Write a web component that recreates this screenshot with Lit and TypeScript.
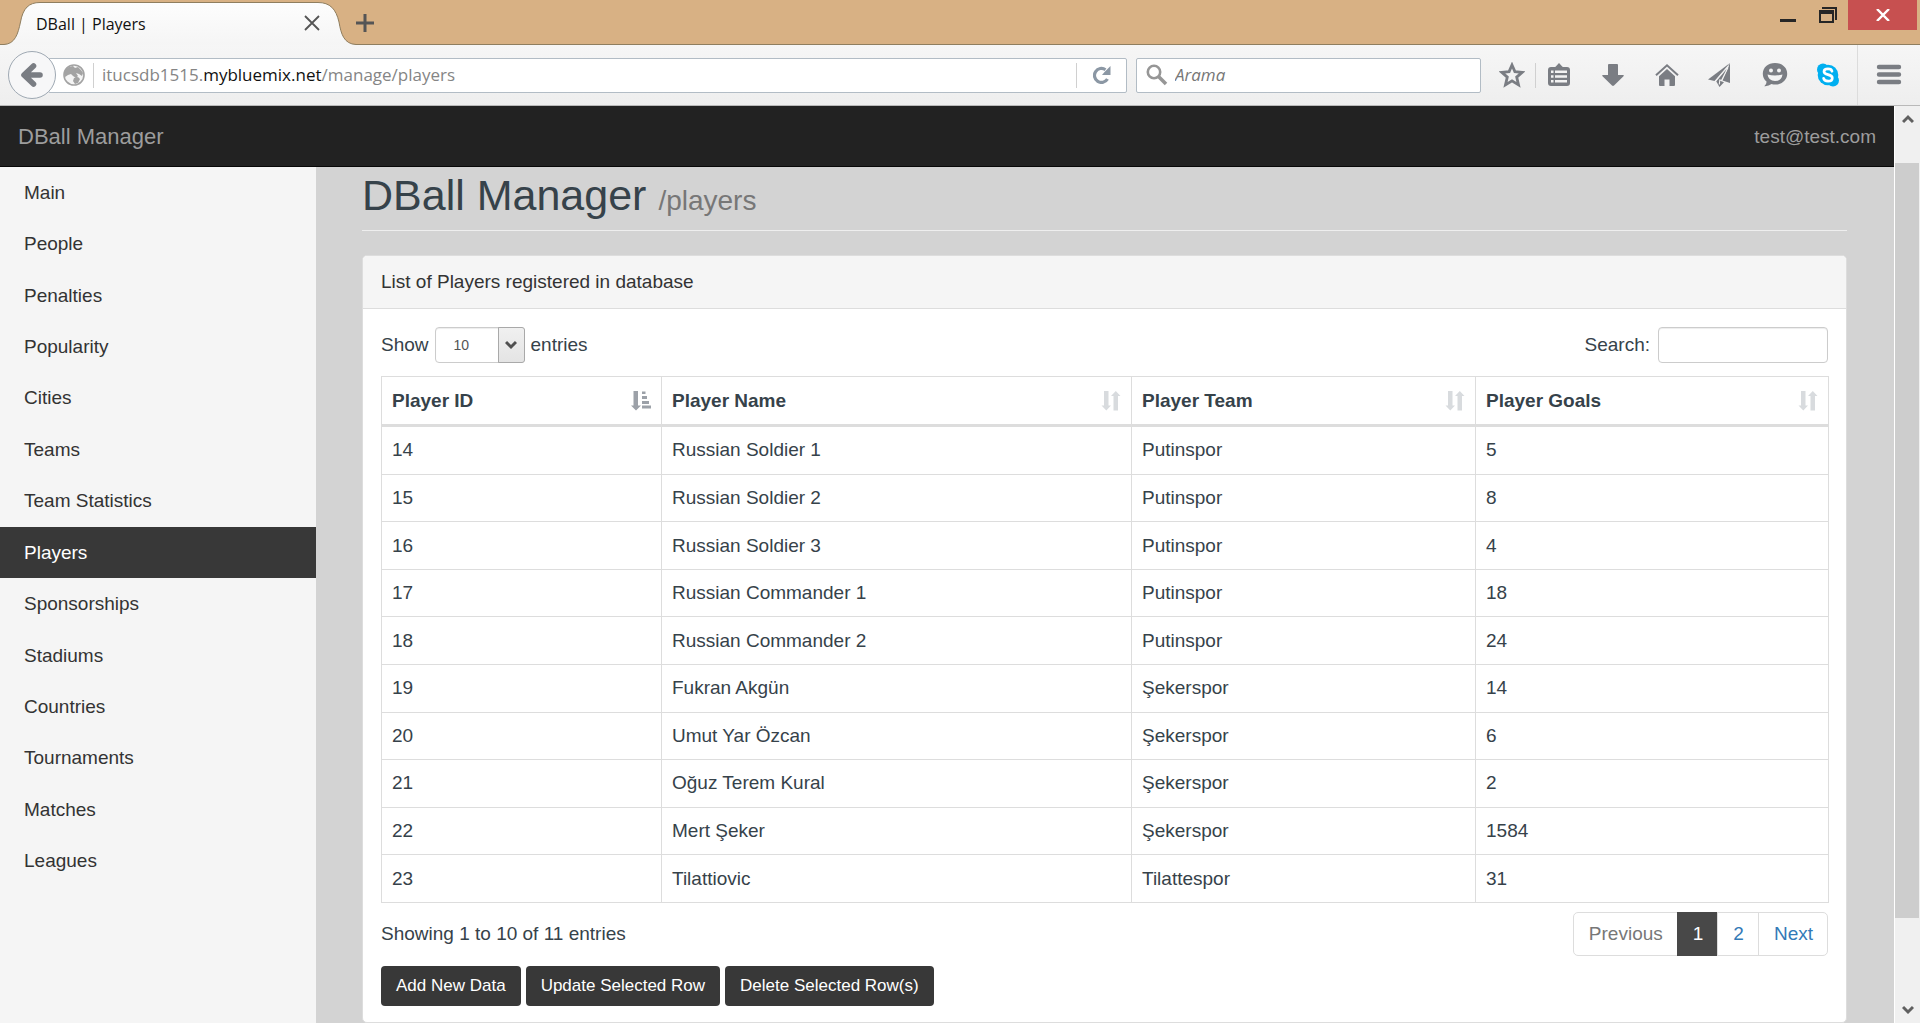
import { LitElement, html, css, svg } from "lit";
import { customElement, property, state } from "lit/decorators.js";
import { classMap } from "lit/directives/class-map.js";

const GRAY = "#7a7d83";

const star = svg`<svg width="26" height="26" viewBox="0 0 26 26" aria-hidden="true"><path d="M13 3 L15.9 9.6 L23.2 10.3 L17.7 15.1 L19.5 22.9 L13 18.9 L6.5 22.9 L8.3 15.1 L2.8 10.3 L10.1 9.6 Z" fill="none" stroke="${GRAY}" stroke-width="2.8"/></svg>`;
const list = svg`<svg width="24" height="26" viewBox="0 0 24 26" aria-hidden="true"><path d="M4 5 H8 Q8.6 4.8 9 4.2 L12 1 L15 4.2 Q15.4 4.8 16 5 H20 Q23 5 23 8 V21 Q23 24 20 24 H4 Q1 24 1 21 V8 Q1 5 4 5 Z" fill="${GRAY}"/><path d="M4 8.500 h2.500 v2.500 h-2.500z M8 8.500 h12 v2.500 h-12z M4 13.200 h2.500 v2.500 h-2.500z M8 13.200 h12 v2.500 h-12z M4 18 h2.500 v2.500 h-2.500z M8 18 h12 v2.500 h-12z" fill="#f3f3f3"/></svg>`;
const download = svg`<svg width="24" height="26" viewBox="0 0 24 26" aria-hidden="true"><path d="M8 2 H16 Q17 2 17 3 V13 H22 Q23.500 13 22.500 14.200 L13 23.500 Q12 24.400 11 23.500 L1.500 14.200 Q0.500 13 2 13 H7 V3 Q7 2 8 2 Z" fill="${GRAY}"/></svg>`;
const home = svg`<svg width="26" height="26" viewBox="0 0 26 26" aria-hidden="true"><path d="M2 13.300 L13 3.300 L24 13.300" fill="none" stroke="${GRAY}" stroke-width="2"/><path d="M5 14.300 L13 7 L21 14.300 V23 Q21 24 20 24 H15.500 V17.500 H10.500 V24 H6 Q5 24 5 23 Z" fill="${GRAY}"/></svg>`;
const plane = svg`<svg width="28" height="26" viewBox="0 0 28 26" aria-hidden="true"><path d="M23 1 L1 17.500 L7.500 19 Z" fill="${GRAY}"/><path d="M23 1 V21 L15.500 18.500 Z" fill="${GRAY}"/><path d="M22.500 2.500 L9 19 L12.500 25 L17 20.300 L14.300 19.300 Z" fill="${GRAY}"/><path d="M21.500 4 L8.500 19.300 M21 5.500 L14.500 18.500 L12.800 18 L12.300 22.500" fill="none" stroke="#f3f3f3" stroke-width="1.100"/></svg>`;
const smile = svg`<svg width="26" height="26" viewBox="0 0 26 26" aria-hidden="true"><path d="M13 1 C20 1 25.200 5.500 25.200 11.800 C25.200 18 20 22.600 13 22.600 Q11.500 22.600 9.500 22.100 Q6.500 24.500 2.300 24.200 Q4.700 22.500 4.500 19.600 Q0.800 16.600 0.800 11.800 C0.800 5.500 6 1 13 1 Z" fill="${GRAY}"/><circle cx="9" cy="8.500" r="2" fill="#f3f3f3"/><circle cx="17" cy="8.500" r="2" fill="#f3f3f3"/><path d="M5.500 12.500 Q13 14.500 20.500 12.500 Q19.500 19 13 19 Q6.500 19 5.500 12.500 Z" fill="#f3f3f3"/></svg>`;
const skype = svg`<svg width="26" height="26" viewBox="0 0 26 26" aria-hidden="true"><circle cx="7" cy="7.500" r="6" fill="#00aff0"/><circle cx="17" cy="18.500" r="6" fill="#00aff0"/><circle cx="12" cy="13" r="10.300" fill="#00aff0"/><path d="M16 9.300 C15.600 7.300 13.800 6.900 12 6.900 C9.600 6.900 8 8 8 9.700 C8 13.500 16.300 11.800 16.300 15.900 C16.300 18 14.400 19.100 12.100 19.100 C9.800 19.100 8 18.200 7.600 16.300" fill="none" stroke="#fff" stroke-width="2.700" stroke-linecap="round"/></svg>`;
const menu = svg`<svg width="26" height="22" viewBox="0 0 26 22" aria-hidden="true"><path d="M3 3 H23 M3 10.500 H23 M3 18 H23" stroke="${GRAY}" stroke-width="4.400" stroke-linecap="round"/></svg>`;

const sortBoth = svg`<svg class="sort both" width="20" height="20" viewBox="0 0 20 20" aria-hidden="true"><path d="M3 0 H7.500 V14.500 H10 L5.300 19.500 L0.500 14.500 H3 Z M12.500 19.500 H17 V5 H19.500 L14.800 0 L10 5 H12.500 Z" fill="#d8dbde"/></svg>`;
const sortAsc = svg`<svg class="sort" width="20" height="20" viewBox="0 0 20 20" aria-hidden="true"><path d="M2.500 0 H7 V14.500 H10 L5 19.500 L0 14.500 H2.500 Z M11 0.500 H14.500 V3 H11 Z M11 5 H16 V8 H11 Z M11 10 H18 V13 H11 Z M11 14.500 H20 V17.500 H11 Z" fill="#9ca1a8"/></svg>`;

@customElement("browser-chrome")
class BrowserChrome extends LitElement {
  static styles = css`
    :host { display: block; font-family: "Open Sans", "Noto Sans", sans-serif; font-size: 17px; }
    button { border: 0; padding: 0; margin: 0; background: none; display: flex; align-items: center; justify-content: center; }
    .titlebar { height: 44px; background: #d8b184; border-bottom: 1px solid #8f7e5f; display: flex; align-items: flex-start; }
    .tab { position: relative; width: 346px; height: 45px; display: flex; align-items: center; }
    .tab-shape { position: absolute; left: 0; top: 0; }
    .title { position: relative; flex: 1; padding-left: 36px; padding-top: 3px; line-height: 24px; font-size: 16px; color: #111; }
    .tab-close { position: relative; width: 24px; height: 42px; margin-right: 22px; }
    .new-tab { width: 38px; height: 46px; margin-right: auto; }
    .win { width: 40px; height: 44px; align-items: flex-start; }
    .win-close { width: 69px; height: 30px; background: #c75050; margin-right: 3px; align-items: center; }
    .toolbar { height: 60px; border-bottom: 1px solid #b9b9b9; background: linear-gradient(#f6f6f6, #eeeeee); display: flex; align-items: center; }
    .back { z-index: 1; width: 48px; height: 48px; margin: 0 -8px 0 8px; border: 1px solid #9fa9b3; border-radius: 50%; background: #f7f7f8; box-sizing: border-box; }
    .field { height: 35px; box-sizing: border-box; border: 1px solid #b2bcc5; background: #fff; display: flex; align-items: center; border-radius: 2px; }
    .url { flex: 1; padding-left: 14px; min-width: 0; }
    .sep { width: 1px; height: 25px; background: #d0d0d0; }
    .globe { margin-right: 8px; flex: none; }
    .address { flex: 1; padding-left: 8px; color: #858585; white-space: nowrap; overflow: hidden; line-height: 24px; }
    .domain { color: #111; }
    .reload { width: 49px; height: 33px; }
    .find { width: 345px; margin: 0 8px 0 9px; padding-left: 9px; gap: 7px; }
    .find input { flex: 1; min-width: 0; border: 0; outline: 0; padding: 0; background: none; font: italic 17px/24px "Open Sans", "Noto Sans", sans-serif; color: #333; }
    .find input::placeholder { color: #777; opacity: 1; }
    .icon { width: 46px; height: 48px; }
    .tools { display: flex; gap: 8px; margin-right: 5px; }
    .edge { width: 1px; height: 60px; background: #dcdcdc; }
    .menu { width: 62px; height: 60px; }
  `;

  render() {
    return html`
      <div class="titlebar">
        <div class="tab">
          <svg class="tab-shape" width="370" height="45" viewBox="0 0 370 45" aria-hidden="true">
            <defs><linearGradient id="tab-fill" x1="0" y1="0" x2="0" y2="1"><stop offset="0" stop-color="#fdfdfd"/><stop offset="1" stop-color="#f5f5f5"/></linearGradient></defs>
            <path d="M0 44.500 H4 C15 44 18 34 20.500 22 C23 8 29 2.500 40 2.500 H318 C330 2.500 336 9 339 22 C341 34 344 44 356 44.500 V46 H0 Z" fill="url(#tab-fill)"/>
            <path d="M0 44.500 H4 C15 44 18 34 20.500 22 C23 8 29 2.500 40 2.500 H318 C330 2.500 336 9 339 22 C341 34 344 44 356 44.500" fill="none" stroke="#8f7e5f"/>
          </svg>
          <span class="title">DBall | Players</span>
          <button class="tab-close" aria-label="Close tab"><svg width="16" height="16" viewBox="0 0 16 16" aria-hidden="true"><path d="M1 1 L15 15 M15 1 L1 15" stroke="#555" stroke-width="1.800"/></svg></button>
        </div>
        <button class="new-tab" aria-label="New tab"><svg width="18" height="18" viewBox="0 0 18 18" aria-hidden="true"><path d="M9 0 V18 M0 9 H18" stroke="#555" stroke-width="3"/></svg></button>
        <button class="win" aria-label="Minimize"><svg width="18" height="24" viewBox="0 0 18 24" aria-hidden="true"><path d="M1 19 H17 V22 H1 Z" fill="#262626"/></svg></button>
        <button class="win" aria-label="Restore"><svg width="18" height="24" viewBox="0 0 18 24" aria-hidden="true"><path d="M3 7 H18 V20 H16 V9 H3 Z M0 10 H15 V23 H0 Z M2 14 V21 H13 V14 Z" fill="#262626" fill-rule="evenodd"/></svg></button>
        <button class="win-close" aria-label="Close window"><svg width="14" height="12" viewBox="0 0 14 12" aria-hidden="true"><path d="M1 0 L13 12 M13 0 L1 12" stroke="#fff" stroke-width="2.400"/></svg></button>
      </div>
      <div class="toolbar">
        <button class="back" aria-label="Back"><svg width="24" height="26" viewBox="0 0 24 26" aria-hidden="true"><path d="M13.500 4 L4 13 L13.500 22 M5 13 H20" fill="none" stroke="${GRAY}" stroke-width="5.600" stroke-linejoin="round" stroke-linecap="round"/></svg></button>
        <div class="field url">
          <svg class="globe" width="22" height="22" viewBox="0 0 22 22" aria-hidden="true"><circle cx="11" cy="11" r="10" fill="#f4f4f4" stroke="#a3a3a3" stroke-width="1.600"/><path d="M6 3 L10 2 L12 4 L15 3 L18 6 L20 9 L19 12 L16 10 L13 9 L15 12 L13 14 L10 12 L8 10 L5 11 L2 13 L1 9 L3 5 Z M11 14 L15 13 L17 15 L15 19 L12 20 L10 17 Z" fill="#a3a3a3"/></svg>
          <span class="sep"></span>
          <div class="address" role="textbox" aria-label="Address">itucsdb1515.<span class="domain">mybluemix.net</span>/manage/players</div>
          <span class="sep"></span>
          <button class="reload" aria-label="Reload"><svg width="18" height="18" viewBox="0 0 18 18" aria-hidden="true"><path d="M14.500 13 A7 7 0 1 1 12.500 3.700" fill="none" stroke="#8b97a4" stroke-width="3.200"/><path d="M17.500 0 V9 H9 L11.500 6 L14 3.500 Z" fill="#8b97a4"/></svg></button>
        </div>
        <div class="field find">
          <svg width="22" height="22" viewBox="0 0 22 22" aria-hidden="true"><circle cx="8" cy="8" r="6.200" fill="none" stroke="#969696" stroke-width="2.600"/><path d="M12.500 12.500 L20 20" stroke="#969696" stroke-width="3.600"/></svg>
          <input type="search" aria-label="Arama" placeholder="Arama" />
        </div>
        <button class="icon" aria-label="Bookmark">${star}</button>
        <span class="sep"></span>
        <div class="tools">
          <button class="icon" aria-label="Bookmarks list">${list}</button>
          <button class="icon" aria-label="Downloads">${download}</button>
          <button class="icon" aria-label="Home">${home}</button>
          <button class="icon" aria-label="Share">${plane}</button>
          <button class="icon" aria-label="Chat">${smile}</button>
          <button class="icon" aria-label="Skype">${skype}</button>
        </div>
        <span class="edge"></span>
        <button class="menu" aria-label="Menu">${menu}</button>
      </div>
    `;
  }
}

@customElement("side-nav")
class SideNav extends LitElement {
  @property() active = "Players";
  private items = ["Main", "People", "Penalties", "Popularity", "Cities", "Teams", "Team Statistics", "Players", "Sponsorships", "Stadiums", "Countries", "Tournaments", "Matches", "Leagues"];

  static styles = css`
    :host { display: block; flex: 0 0 316px; background: #f5f5f5; }
    ul { list-style: none; margin: 0; padding: 0; height: 720px; display: grid; grid-auto-rows: 1fr; }
    li { display: flex; }
    a { flex: 1; display: flex; align-items: center; padding: 0 24px; color: #333; text-decoration: none; }
    a.active { background: #383838; color: #fff; }
  `;

  render() {
    return html`<nav><ul>${this.items.map(
      (name) => html`<li><a href="#" class=${classMap({ active: name === this.active })}>${name}</a></li>`
    )}</ul></nav>`;
  }
}

@customElement("player-panel")
class PlayerPanel extends LitElement {
  @state() private rows: [number, string, string, number][] = [
    [14, "Russian Soldier 1", "Putinspor", 5],
    [15, "Russian Soldier 2", "Putinspor", 8],
    [16, "Russian Soldier 3", "Putinspor", 4],
    [17, "Russian Commander 1", "Putinspor", 18],
    [18, "Russian Commander 2", "Putinspor", 24],
    [19, "Fukran Akgün", "Şekerspor", 14],
    [20, "Umut Yar Özcan", "Şekerspor", 6],
    [21, "Oğuz Terem Kural", "Şekerspor", 2],
    [22, "Mert Şeker", "Şekerspor", 1584],
    [23, "Tilattiovic", "Tilattespor", 31],
  ];

  static styles = css`
    :host { display: block; background: #fff; border: 1px solid #ddd; border-radius: 5px; color: #36424a; }
    .heading { padding: 12px 18px; line-height: 28px; background: #f5f5f5; color: #333; border-bottom: 1px solid #ddd; border-radius: 4px 4px 0 0; }
    .body { padding: 18px 18px 16px; }
    .bar { display: flex; justify-content: space-between; align-items: center; }
    .filters { margin-bottom: 13px; }
    label { display: flex; align-items: center; gap: 6px; }
    .select { display: flex; position: relative; }
    select { appearance: none; width: 90px; height: 36px; margin: 0; padding: 0 18px; border: 1px solid #ccc; border-radius: 4px; background: #fff; box-shadow: inset 0 1px 1px rgba(0, 0, 0, 0.075); font: 14px "Liberation Sans", Arial, sans-serif; color: #555; }
    .arrow { position: absolute; right: 0; top: 0; width: 25px; height: 34px; border: 1px solid #a9a9a9; border-radius: 0 3px 3px 0; background: linear-gradient(#f0f0f0, #e4e4e4); display: flex; align-items: center; justify-content: center; pointer-events: none; }
    .search { gap: 8px; }
    .search input { width: 170px; height: 36px; box-sizing: border-box; border: 1px solid #ccc; border-radius: 4px; padding: 0 12px; box-shadow: inset 0 1px 1px rgba(0, 0, 0, 0.075); font: 14px "Liberation Sans", Arial, sans-serif; }
    table { width: 100%; height: 527px; table-layout: fixed; border-collapse: collapse; margin-bottom: 9px; }
    th, td { border: 1px solid #ddd; padding: 0 10px; text-align: left; height: 46px; }
    th { border-bottom-width: 3px; height: 47px; }
    .th { display: flex; justify-content: space-between; align-items: center; }
    .c1 { width: 280px; }
    .c2 { width: 470px; }
    .c3 { width: 344px; }
    .c4 { width: 353px; }
    .pages { display: flex; list-style: none; margin: 0; padding: 0; }
    .pages a { display: block; line-height: 42px; padding: 0 14px 0 15px; border: 1px solid #ddd; margin-left: -1px; color: #337ab7; text-decoration: none; }
    .pages .prev { color: #777; border-radius: 5px 0 0 5px; }
    .pages .next { border-radius: 0 5px 5px 0; }
    .pages .current { color: #fff; background: #484848; border-color: #484848; }
    .actions { display: flex; gap: 5px; margin-top: 10px; }
    .actions button { height: 40px; margin: 0; padding: 0 15px; border: 0; border-radius: 4px; background: #383838; color: #fff; font: 17px "Liberation Sans", Arial, sans-serif; }
  `;

  render() {
    return html`
      <div class="heading">List of Players registered in database</div>
      <div class="body">
        <div class="bar filters">
          <label>Show
            <span class="select">
              <select><option>10</option><option>25</option><option>50</option><option>100</option></select>
              <span class="arrow"><svg width="12" height="10" viewBox="0 0 12 10" aria-hidden="true"><path d="M1 2 L6 7 L11 2" fill="none" stroke="#505050" stroke-width="3"/></svg></span>
            </span>
            entries</label>
          <label class="search">Search: <input type="search" /></label>
        </div>
        <table>
          <colgroup><col class="c1" /><col class="c2" /><col class="c3" /><col class="c4" /></colgroup>
          <thead><tr>${["Player ID", "Player Name", "Player Team", "Player Goals"].map(
            (name, i) => html`<th scope="col"><div class="th">${name}${i === 0 ? sortAsc : sortBoth}</div></th>`
          )}</tr></thead>
          <tbody>${this.rows.map((row) => html`<tr>${row.map((cell) => html`<td>${cell}</td>`)}</tr>`)}</tbody>
        </table>
        <div class="bar">
          <span>Showing 1 to 10 of 11 entries</span>
          <ul class="pages">
            <li><a class="prev" href="#">Previous</a></li>
            <li><a class="current" href="#" aria-current="page">1</a></li>
            <li><a href="#">2</a></li>
            <li><a class="next" href="#">Next</a></li>
          </ul>
        </div>
        <div class="actions">
          <button>Add New Data</button>
          <button>Update Selected Row</button>
          <button>Delete Selected Row(s)</button>
        </div>
      </div>
    `;
  }
}

@customElement("app-root")
class AppRoot extends LitElement {
  static styles = css`
    :host { display: flex; flex-direction: column; height: 100vh; overflow: hidden; font-family: "Liberation Sans", Arial, sans-serif; font-size: 19px; }
    .view { flex: 1; min-height: 0; display: flex; }
    .page { flex: 1; min-width: 0; display: flex; flex-direction: column; }
    .navbar { flex: none; height: 58px; padding: 2px 18px 0; background: #222; border-bottom: 1px solid #080808; display: flex; align-items: center; justify-content: space-between; }
    .navbar a { color: #9d9d9d; text-decoration: none; }
    .navbar .brand { font-size: 22px; }
    .content { flex: 1; min-height: 0; display: flex; background: #d3d3d3; overflow: hidden; }
    main { flex: 1; min-width: 0; padding: 5px 47px 0 46px; }
    h1 { margin: 0 0 24px; padding-bottom: 11px; border-bottom: 1px solid #eee; font-size: 43px; line-height: 47px; font-weight: 400; color: #36424a; }
    small { font-size: 28px; line-height: 28px; color: #777; }
    .scrollbar { flex: 0 0 25px; border-left: 1px solid #fff; background: #f0f0f0; display: flex; flex-direction: column; }
    .scrollbar button { flex: none; height: 26px; border: 0; padding: 0; background: none; display: flex; align-items: center; justify-content: center; }
    .before { flex: 31; }
    .thumb { flex: 755; background: #cdcdcd; margin-right: 1px; }
    .after { flex: 79; }
  `;

  render() {
    return html`
      <browser-chrome></browser-chrome>
      <div class="view">
        <div class="page">
          <header class="navbar"><a class="brand" href="#">DBall Manager</a><a href="#">test@test.com</a></header>
          <div class="content">
            <side-nav active="Players"></side-nav>
            <main>
              <h1>DBall Manager <small>/players</small></h1>
              <player-panel></player-panel>
            </main>
          </div>
        </div>
        <div class="scrollbar">
          <button aria-label="Scroll up"><svg width="12" height="10" viewBox="0 0 12 10" aria-hidden="true"><path d="M1 8 L6 3 L11 8" fill="none" stroke="#606060" stroke-width="3"/></svg></button>
          <div class="before"></div><div class="thumb"></div><div class="after"></div>
          <button aria-label="Scroll down"><svg width="12" height="10" viewBox="0 0 12 10" aria-hidden="true"><path d="M1 2 L6 7 L11 2" fill="none" stroke="#606060" stroke-width="3"/></svg></button>
        </div>
      </div>
    `;
  }
}
